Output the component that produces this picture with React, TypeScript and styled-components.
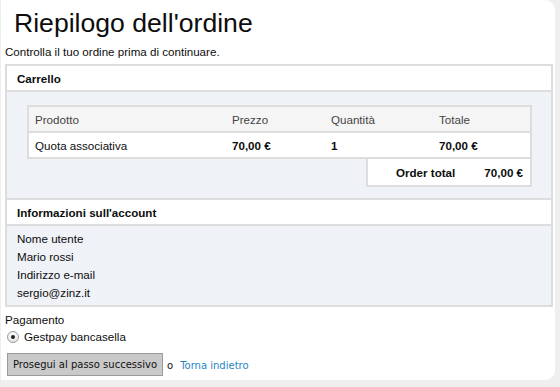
import React from 'react'
import styled, { createGlobalStyle } from 'styled-components'

const GlobalStyle = createGlobalStyle`
  html, body {
    margin: 0;
    padding: 0;
    background: #efefef;
  }
  body {
    font-family: 'Liberation Sans', Arial, Helvetica, sans-serif;
    color: #1a1a1a;
  }
`

const cartRows = [{ product: 'Quota associativa', price: '70,00 €', qty: '1', total: '70,00 €' }]

const accountInfo = ['Nome utente', 'Mario rossi', 'Indirizzo e-mail', 'sergio@zinz.it']

const App = () => {
  return (
    <>
      <GlobalStyle />
      <Card>
        <Title>Riepilogo dell'ordine</Title>
        <Intro>Controlla il tuo ordine prima di continuare.</Intro>

        <Panel>
          <PanelHeader>Carrello</PanelHeader>
          <CartBody>
            <CartTable>
              <TableRow $head>
                <Cell>Prodotto</Cell>
                <Cell>Prezzo</Cell>
                <Cell>Quantità</Cell>
                <Cell>Totale</Cell>
              </TableRow>
              {cartRows.map((row) => (
                <TableRow key={row.product}>
                  <Cell>{row.product}</Cell>
                  <Cell $strong>{row.price}</Cell>
                  <Cell $strong>{row.qty}</Cell>
                  <Cell $strong>{row.total}</Cell>
                </TableRow>
              ))}
            </CartTable>
            <TotalBox>
              <span>Order total</span>
              <span>70,00 €</span>
            </TotalBox>
          </CartBody>

          <PanelHeader>Informazioni sull'account</PanelHeader>
          <InfoBody>
            {accountInfo.map((line) => (
              <InfoLine key={line}>{line}</InfoLine>
            ))}
          </InfoBody>
        </Panel>

        <PaymentLabel>Pagamento</PaymentLabel>
        <RadioRow>
          <Radio />
          <span>Gestpay bancasella</span>
        </RadioRow>

        <Actions>
          <SubmitButton type="button">Prosegui al passo successivo</SubmitButton>
          <Or>o</Or>
          <BackLink href="#">Torna indietro</BackLink>
        </Actions>
      </Card>
    </>
  )
}

const Card = styled.div`
  box-sizing: border-box;
  width: 554px;
  height: 380px;
  margin-left: 1px;
  padding: 0 2px 3px 4px;
  background: #ffffff;
  border-radius: 0 10px 10px 0;
  display: flex;
  flex-direction: column;
`

const Title = styled.h1`
  margin: 0;
  padding: 7px 0 0 9px;
  font-size: 26.6px;
  line-height: 32px;
  font-weight: normal;
  color: #0d0d0d;
`

const Intro = styled.p`
  margin: 6px 0 0;
  font-size: 11.6px;
  line-height: 14px;
  color: #0d0d0d;
`

const Panel = styled.div`
  margin-top: 5px;
  border: 2px solid #dddddd;
  border-bottom: none;
`

const PanelHeader = styled.div`
  height: 24px;
  padding-left: 10px;
  display: flex;
  align-items: center;
  font-size: 11.6px;
  font-weight: bold;
  color: #0d0d0d;
  background: #ffffff;
  border-bottom: 2px solid #dddddd;
`

const CartBody = styled.div`
  display: flex;
  flex-direction: column;
  padding: 13px 19px 11px 20px;
  background: #eff2f7;
  border-bottom: 2px solid #dddddd;
`

const CartTable = styled.div`
  border: 2px solid #dddddd;
  background: #ffffff;
`

const TableRow = styled.div<{ $head?: boolean }>`
  display: grid;
  grid-template-columns: 197px 99px 108px 1fr;
  height: 24px;
  align-items: center;
  font-size: 11.6px;
  color: ${(p) => (p.$head ? '#444444' : '#0d0d0d')};
  background: ${(p) => (p.$head ? '#f5f5f5' : '#ffffff')};

  & + & {
    border-top: 2px solid #dddddd;
  }
`

const Cell = styled.div<{ $strong?: boolean }>`
  padding-left: 6px;
  font-weight: ${(p) => (p.$strong ? 'bold' : 'normal')};
`

const TotalBox = styled.div`
  align-self: flex-end;
  box-sizing: border-box;
  width: 166px;
  height: 28px;
  padding: 0 7px 0 28px;
  display: flex;
  align-items: center;
  justify-content: space-between;
  background: #ffffff;
  border: 2px solid #dddddd;
  border-top: none;
  font-size: 11.6px;
  font-weight: bold;
  color: #0d0d0d;
`

const InfoBody = styled.div`
  padding: 4px 10px 3px;
  background: #eff2f7;
  border-bottom: 2px solid #dddddd;
`

const InfoLine = styled.div`
  font-size: 11.6px;
  line-height: 18px;
  color: #0d0d0d;
`

const PaymentLabel = styled.div`
  margin-top: 5px;
  font-size: 11.6px;
  line-height: 16px;
  color: #0d0d0d;
`

const RadioRow = styled.label`
  margin-top: 1px;
  display: flex;
  align-items: center;
  gap: 5px;
  padding-left: 2px;
  font-size: 11.6px;
  line-height: 16px;
  color: #0d0d0d;
`

const Radio = styled.span`
  position: relative;
  box-sizing: border-box;
  width: 12px;
  height: 12px;
  border-radius: 50%;
  border: 1px solid #9c9c9c;
  background: linear-gradient(#ffffff, #e4e4e4);
  box-shadow: inset 0 1px 1px rgba(0, 0, 0, 0.08);

  &::after {
    content: '';
    position: absolute;
    left: 3px;
    top: 3px;
    width: 4px;
    height: 4px;
    border-radius: 50%;
    background: #222222;
  }
`

const Actions = styled.div`
  margin-top: 8px;
  padding-left: 2px;
  display: flex;
  align-items: center;
  font-family: 'DejaVu Sans', Verdana, sans-serif;
  font-size: 10px;
`

const SubmitButton = styled.button`
  box-sizing: border-box;
  width: 156px;
  height: 23px;
  padding: 0;
  border: 1px solid #9a9a9a;
  background: #c9c9c9;
  font-family: inherit;
  font-size: 10px;
  color: #111111;
  cursor: pointer;
`

const Or = styled.span`
  margin: 2px 7px 0 4px;
  color: #111111;
`

const BackLink = styled.a`
  margin-top: 2px;
  color: #2784c6;
  text-decoration: none;
`

export default App
